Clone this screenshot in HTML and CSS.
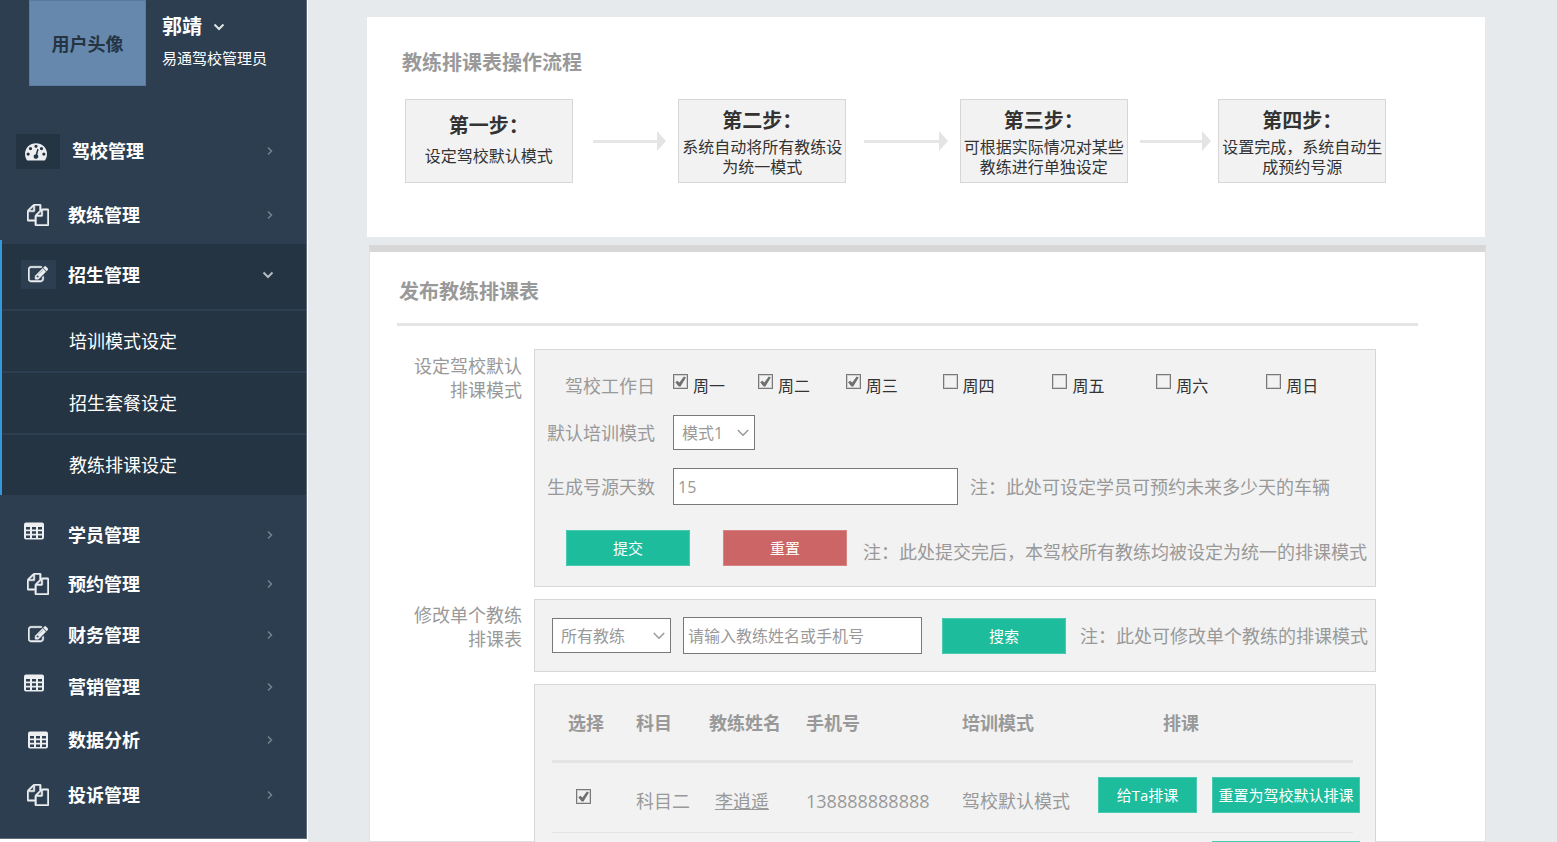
FILE: index.html
```html
<!DOCTYPE html>
<html lang="zh-CN">
<head>
<meta charset="utf-8">
<title>教练排课设定</title>
<link rel="stylesheet" href="styles.css">
</head>
<body>
<svg class="sprite" aria-hidden="true">
  <symbol id="i-dash" viewBox="0 0 1792 1792"><path d="M384 1152q0-53-37.500-90.500t-90.500-37.500-90.500 37.500-37.500 90.500 37.500 90.500 90.500 37.500 90.500-37.500 37.500-90.500zm192-448q0-53-37.500-90.500t-90.500-37.500-90.500 37.500-37.500 90.500 37.500 90.500 90.500 37.500 90.500-37.500 37.500-90.500zm428 481l101-382q6-26-7.500-48.500t-38.500-29.500-48 6.500-30 39.500l-101 382q-60 5-107 43.500t-63 98.500q-20 77 20 146t117 89 146-20 89-117q16-60-6-117t-72-91zm660-33q0-53-37.500-90.500t-90.500-37.500-90.500 37.500-37.500 90.500 37.500 90.500 90.500 37.500 90.500-37.500 37.500-90.500zm-640-640q0-53-37.500-90.500t-90.500-37.500-90.500 37.500-37.500 90.500 37.500 90.500 90.500 37.500 90.500-37.500 37.500-90.500zm448 192q0-53-37.500-90.500t-90.500-37.500-90.500 37.500-37.500 90.500 37.500 90.500 90.500 37.500 90.500-37.500 37.500-90.500zm320 448q0 261-141 483-19 29-54 29h-1402q-35 0-54-29-141-221-141-483 0-182 71-348t191-286 286-191 348-71 348 71 286 191 191 286 71 348z"/></symbol>
  <symbol id="i-files" viewBox="0 0 1792 1792"><path stroke="currentColor" stroke-width="40" d="M1696 384q40 0 68 28t28 68v1216q0 40-28 68t-68 28h-960q-40 0-68-28t-28-68v-288h-544q-40 0-68-28t-28-68v-672q0-40 20-88t48-76l408-408q28-28 76-48t88-20h416q40 0 68 28t28 68v328q68-40 128-40h416zm-544 213l-299 299h299v-299zm-640-384l-299 299h299v-299zm196 647l316-316v-416h-384v416q0 40-28 68t-68 28h-416v640h512v-256q0-40 20-88t48-76zm956 804v-1152h-384v416q0 40-28 68t-68 28h-416v640h896z"/></symbol>
  <symbol id="i-edit" viewBox="0 60 1792 1700"><path stroke="currentColor" stroke-width="50" d="M888 1184l116-116-152-152-116 116v56h96v96h56zm440-720q-16-16-33 1l-350 350q-17 17-1 33t33-1l350-350q17-17 1-33zm80 594v190q0 119-84.500 203.500t-203.500 84.500h-832q-119 0-203.500-84.500t-84.500-203.500v-832q0-119 84.500-203.500t203.500-84.500h832q63 0 117 25 15 7 18 23 3 17-9 29l-49 49q-14 14-32 8-23-6-45-6h-832q-66 0-113 47t-47 113v832q0 66 47 113t113 47h832q66 0 113-47t47-113v-126q0-13 9-22l64-64q15-15 35-7t20 29zm-96-738l288 288-672 672h-288v-288zm444 132l-92 92-288-288 92-92q28-28 68-28t68 28l152 152q28 28 28 68t-28 68z"/></symbol>
  <symbol id="i-table" viewBox="0 0 20 20"><path fill-rule="evenodd" d="M2 1.500h16a2 2 0 0 1 2 2v13a2 2 0 0 1-2 2H2a2 2 0 0 1-2-2v-13a2 2 0 0 1 2-2zM2 6v2.600h4V6zM8 6v2.600h4V6zM14 6v2.600h4V6zM2 10.200v2.600h4v-2.600zM8 10.200v2.600h4v-2.600zM14 10.200v2.600h4v-2.600zM2 14.400V17h4v-2.600zM8 14.400V17h4v-2.600zM14 14.400V17h4v-2.600z"/></symbol>
  <symbol id="i-right" viewBox="0 0 8 10"><path d="M2 1.500L5.500 5 2 8.500" fill="none" stroke="currentColor" stroke-width="1.500"/></symbol>
  <symbol id="i-down" viewBox="0 0 12 8"><path d="M1.500 1.500L6 6l4.500-4.500" fill="none" stroke="currentColor" stroke-width="2"/></symbol>
  <symbol id="i-select" viewBox="0 0 12 8"><path d="M.8 1L6 6.200 11.200 1" fill="none" stroke="currentColor" stroke-width="1.500"/></symbol>
</svg>
<div class="app">
  <aside class="sidebar">
    <div class="profile">
      <div class="avatar">用户头像</div>
      <div class="profile-text">
        <button class="user" type="button">郭靖 <svg class="user-arrow"><use href="#i-down"/></svg></button>
        <div class="role">易通驾校管理员</div>
      </div>
    </div>
    <nav>
      <div class="nav-top">
        <a class="nav-item nav-item--wide" href="#"><span class="nav-icon nav-icon--dark"><svg class="icon-lg"><use href="#i-dash"/></svg></span>驾校管理<svg class="more"><use href="#i-right"/></svg></a>
        <a class="nav-item" href="#"><span class="nav-icon"><svg class="icon-lg"><use href="#i-files"/></svg></span>教练管理<svg class="more"><use href="#i-right"/></svg></a>
      </div>
      <div class="nav-group">
        <a class="nav-item nav-item--open" href="#"><span class="nav-icon"><span class="nav-chip"><svg class="icon"><use href="#i-edit"/></svg></span></span>招生管理<svg class="more more--down"><use href="#i-down"/></svg></a>
        <a class="sub" href="#">培训模式设定</a>
        <a class="sub" href="#">招生套餐设定</a>
        <a class="sub" href="#">教练排课设定</a>
      </div>
      <div class="nav-rest">
        <a class="nav-item" href="#"><span class="nav-icon nav-icon--raised"><svg class="icon"><use href="#i-table"/></svg></span>学员管理<svg class="more"><use href="#i-right"/></svg></a>
        <a class="nav-item" href="#"><span class="nav-icon"><svg class="icon-lg"><use href="#i-files"/></svg></span>预约管理<svg class="more"><use href="#i-right"/></svg></a>
        <a class="nav-item" href="#"><span class="nav-icon"><svg class="icon"><use href="#i-edit"/></svg></span>财务管理<svg class="more"><use href="#i-right"/></svg></a>
        <a class="nav-item" href="#"><span class="nav-icon nav-icon--raised"><svg class="icon"><use href="#i-table"/></svg></span>营销管理<svg class="more"><use href="#i-right"/></svg></a>
        <a class="nav-item" href="#"><span class="nav-icon"><svg class="icon"><use href="#i-table"/></svg></span>数据分析<svg class="more"><use href="#i-right"/></svg></a>
        <a class="nav-item" href="#"><span class="nav-icon"><svg class="icon-lg"><use href="#i-files"/></svg></span>投诉管理<svg class="more"><use href="#i-right"/></svg></a>
      </div>
    </nav>
  </aside>

  <main class="main">
    <section class="panel panel--flow">
      <h2 class="title">教练排课表操作流程</h2>
      <div class="steps">
        <div class="step step--single"><h3>第一步：</h3><p>设定驾校默认模式</p></div>
        <div class="arrow arrow--first"></div>
        <div class="step"><h3>第二步：</h3><p>系统自动将所有教练设为统一模式</p></div>
        <div class="arrow arrow--second"></div>
        <div class="step"><h3>第三步：</h3><p>可根据实际情况对某些教练进行单独设定</p></div>
        <div class="arrow arrow--third"></div>
        <div class="step"><h3>第四步：</h3><p>设置完成，系统自动生成预约号源</p></div>
      </div>
    </section>

    <section class="panel panel--publish">
      <h2 class="title title--ruled">发布教练排课表</h2>
      <div class="form">
        <div class="side-label">设定驾校默认<br>排课模式</div>
        <form class="box box--defaults">
          <div class="line line--days">
            <span class="field-label">驾校工作日</span>
            <div class="days">
              <label><input class="check" type="checkbox" checked>周一</label>
              <label><input class="check" type="checkbox" checked>周二</label>
              <label><input class="check" type="checkbox" checked>周三</label>
              <label><input class="check" type="checkbox">周四</label>
              <label><input class="check" type="checkbox">周五</label>
              <label><input class="check" type="checkbox">周六</label>
              <label><input class="check" type="checkbox">周日</label>
            </div>
          </div>
          <div class="line line--mode">
            <label class="field-label" for="mode">默认培训模式</label>
            <span class="select select--mode"><select id="mode"><option>模式1</option></select><svg><use href="#i-select"/></svg></span>
          </div>
          <div class="line">
            <label class="field-label" for="count">生成号源天数</label>
            <input class="text text--count" id="count" type="text" value="15">
            <span class="note">注：此处可设定学员可预约未来多少天的车辆</span>
          </div>
          <div class="line line--actions">
            <button class="btn" type="button">提交</button>
            <button class="btn btn--red" type="button">重置</button>
            <span class="note">注：此处提交完后，本驾校所有教练均被设定为统一的排课模式</span>
          </div>
        </form>

        <div class="side-label side-label--search">修改单个教练<br>排课表</div>
        <form class="box box--search">
          <span class="select select--coach"><select aria-label="教练"><option>所有教练</option></select><svg><use href="#i-select"/></svg></span>
          <input class="text text--search" type="text" aria-label="教练姓名或手机号" placeholder="请输入教练姓名或手机号">
          <button class="btn" type="button">搜索</button>
          <span class="note">注：此处可修改单个教练的排课模式</span>
        </form>

        <div class="box box--table">
          <table>
            <colgroup><col class="c-pick"><col class="c-subject"><col class="c-name"><col class="c-phone"><col class="c-mode"><col></colgroup>
            <thead>
              <tr><th class="pick">选择</th><th>科目</th><th>教练姓名</th><th>手机号</th><th>培训模式</th><th class="plan">排课</th></tr>
            </thead>
            <tbody>
              <tr>
                <td class="tick"><input class="check" type="checkbox" aria-label="选择李逍遥" checked></td>
                <td>科目二</td>
                <td class="name"><a href="#">李逍遥</a></td>
                <td>138888888888</td>
                <td>驾校默认模式</td>
                <td><div class="row-actions"><button class="btn btn--plan" type="button">给Ta排课</button><button class="btn btn--default" type="button">重置为驾校默认排课</button></div></td>
              </tr>
              <tr class="next">
                <td></td><td></td><td></td><td></td><td></td>
                <td><div class="row-actions"><button class="btn btn--default" type="button" aria-label="重置为驾校默认排课"></button></div></td>
              </tr>
            </tbody>
          </table>
        </div>
      </div>
    </section>
  </main>
</div>
</body>
</html>
```
FILE: styles.css
```css
* { box-sizing: border-box; }

body {
  margin: 0;
  height: 100vh;
  overflow: hidden;
  background: #fff;
  color: #999;
  font: 18px/24px "Open Sans", "Noto Sans CJK SC", sans-serif;
}

button, input, select { font: inherit; margin: 0; }
h2, h3, p { margin: 0; }
a { color: inherit; }
svg { fill: currentColor; flex: none; }
.sprite { position: absolute; width: 0; height: 0; }

.app { display: flex; height: 100%; align-items: flex-start; gap: 1px; }

/* Sidebar */
.sidebar {
  flex: none;
  width: 307px;
  padding-bottom: 15px;
  background: #2d3e50;
  border-right: 1px solid #5f6c79;
  border-bottom: 1px solid #5f6c79;
  color: #fff;
}
.profile { display: flex; gap: 16px; padding-left: 29px; }
.avatar {
  width: 117px;
  height: 86px;
  border: 1px solid #5b7a9f;
  background: #6688ad;
  color: #243443;
  font-weight: bold;
  line-height: 86px;
  text-align: center;
}
.profile-text { padding-top: 12px; }
.user {
  display: flex;
  align-items: center;
  gap: 11px;
  padding: 0;
  border: 0;
  background: none;
  color: #fff;
  font-size: 20px;
  font-weight: bold;
  line-height: 30px;
}
.user-arrow { width: 12px; height: 8px; color: #dfe3e6; }
.role { padding-top: 4px; font-size: 15px; }

.nav-top { display: grid; gap: 14px; padding-top: 40px; }
.nav-item {
  display: flex;
  align-items: center;
  gap: 8px;
  height: 50px;
  padding: 0 32px 0 16px;
  font-weight: bold;
  text-decoration: none;
}
.nav-item--wide { gap: 12px; }
.nav-icon {
  display: flex;
  align-items: center;
  justify-content: center;
  width: 44px;
  height: 35px;
  color: #eceef0;
}
.nav-icon--dark { background: #243443; padding-right: 4px; }
.nav-icon--raised { padding: 0 8px 8px 0; }
.nav-chip {
  display: flex;
  align-items: center;
  justify-content: center;
  width: 35px;
  height: 29px;
  background: #2d3e50;
}
.icon { width: 20px; height: 20px; }
.icon-lg { width: 22px; height: 22px; }
.more { width: 8px; height: 10px; margin-left: auto; color: #76828e; }
.more--down { width: 12px; height: 8px; color: #b4bbc2; }

.nav-group {
  padding-top: 4px;
  border-left: 2px solid #3498db;
}
.nav-group .nav-item { padding-left: 14px; }
.nav-group .nav-item--open { height: 65px; padding-bottom: 4px; background: #243443; }
.sub {
  display: flex;
  align-items: center;
  height: 62px;
  padding-left: 67px;
  border-top: 2px solid #2d3e50;
  background: #243443;
  text-decoration: none;
}
.nav-rest {
  display: grid;
  grid-template-rows: 48px 50px 52px 52px 54px 56px;
  align-items: center;
  padding-top: 16px;
}
.nav-rest .nav-item { height: 48px; }

/* Content */
.main {
  flex: 1;
  min-width: 0;
  height: 100%;
  display: flex;
  flex-direction: column;
  padding: 17px 71px 0 59px;
  background: #e6eaed;
}
.panel { background: #fff; }
.panel--flow { margin-right: 1px; padding: 30px 99px 54px 38px; }
.panel--publish {
  flex: 1;
  min-height: 0;
  margin: 8px 0 0 2px;
  padding: 24px 109px 0 27px;
  border: 1px solid #dfe1e3;
  border-top: 7px solid #d7d7d7;
}
.title { font-size: 20px; line-height: 32px; }
.panel--flow .title { margin: 0 0 20px -3px; }
.title--ruled {
  margin-right: -42px;
  padding: 0 0 15px 2px;
  border-bottom: 3px solid #e4e4e4;
}

.steps {
  display: grid;
  grid-template-columns: 168fr 106fr 168fr 114fr 168fr 91fr 168fr;
}
.step {
  min-width: 0;
  height: 84px;
  padding-top: 7px;
  border: 1px solid #d7d7d7;
  background: #f2f2f2;
  color: #333;
  text-align: center;
}
.step h3 { font-size: 20px; line-height: 28px; }
.step p { padding-top: 2px; font-size: 16px; line-height: 20px; }
.step--single { padding-top: 12px; }
.step--single p { padding-top: 6px; }
.arrow { display: flex; align-items: center; padding: 0 12px 0 20px; }
.arrow--second { padding-left: 18px; }
.arrow--third { padding: 0 7px 0 12px; }
.arrow::before { content: ""; flex: 1; height: 3px; background: #e6e6e6; }
.arrow::after {
  content: "";
  border: 10px solid transparent;
  border-left: 9px solid #e4e4e4;
  border-right: 0;
}

.form {
  display: grid;
  grid-template-columns: 125px minmax(0, 1fr);
  gap: 12px;
  padding-top: 23px;
}
.side-label { padding-top: 5px; text-align: right; }
.side-label--search { padding-top: 4px; }
.box { border: 1px solid #d7d7d7; background: #f2f2f2; }
.box--defaults { padding: 24px 5px 20px 12px; }
.line { display: flex; align-items: center; white-space: nowrap; margin-top: 18px; }
.line--days { margin-top: 0; }
.line--mode { margin-top: 17px; }
.field-label { width: 108px; margin-right: 18px; text-align: right; }
.days {
  flex: 1;
  display: grid;
  grid-template-columns: 85fr 88fr 97fr 110fr 104fr 110fr 104fr;
  color: #333;
  font-size: 16px;
}
.days label { display: flex; align-items: flex-start; gap: 5px; }

.check {
  appearance: none;
  display: block;
  flex: none;
  width: 15px;
  height: 15px;
  border: 1px solid #797979;
  background: #f2f2f2;
  box-shadow: inset 0 0 0 1px #d0d0d0;
}
.check:checked::before {
  content: "";
  display: block;
  width: 13px;
  height: 13px;
  background: #707070;
  clip-path: polygon(10% 55%, 26% 44%, 42% 58%, 76% 12%, 92% 20%, 50% 88%, 36% 88%);
}

.select { position: relative; height: 35px; }
.select select {
  appearance: none;
  width: 100%;
  height: 100%;
  padding: 0 8px;
  border: 1px solid #797979;
  border-radius: 0;
  background: #fff;
  color: #999;
  font-size: 16px;
}
.select svg { position: absolute; right: 6px; top: 14px; width: 12px; height: 8px; pointer-events: none; }
.select--mode { width: 82px; }
.select--coach { width: 119px; }
.text {
  height: 37px;
  padding: 0 4px;
  border: 1px solid #797979;
  background: #fff;
  color: #999;
  font-size: 16px;
}
.text::placeholder { color: #999; }
.text--count { width: 285px; margin-right: 12px; }
.text--search { width: 239px; margin: 0 20px 0 12px; }
.note { white-space: nowrap; }

.btn {
  flex: none;
  width: 124px;
  height: 36px;
  padding: 0;
  border: 1px solid #49c9b0;
  background: #1cbc9c;
  color: #fff;
  font-size: 15px;
  white-space: nowrap;
}
.btn--red { border-color: #d68484; background: #cc6666; }
.line--actions { align-items: flex-end; margin-top: 25px; padding-left: 19px; }
.line--actions .btn--red { margin: 0 16px 0 33px; }
.line--actions .note { line-height: 28px; }

.box--search { display: flex; align-items: center; height: 73px; padding-left: 17px; }
.box--search .btn { margin-right: 14px; }

.box--table { grid-column: 2; padding: 0 22px 0 17px; }
table { width: 100%; table-layout: fixed; border-collapse: separate; border-spacing: 0; }
.c-pick { width: 84px; }
.c-subject { width: 73px; }
.c-name { width: 97px; }
.c-phone { width: 156px; }
.c-mode { width: 136px; }
th, td { padding: 0; text-align: left; white-space: nowrap; }
th { height: 78px; border-bottom: 3px solid #e4e4e4; }
td { height: 70px; padding-bottom: 19px; border-bottom: 1px solid #e4e4e4; vertical-align: bottom; }
.pick { padding-left: 16px; }
.plan { padding-left: 65px; }
.tick { padding: 0 0 28px 24px; }
.name { padding-left: 6px; }
.row-actions { display: flex; gap: 15px; }
.btn--plan { width: 99px; }
.btn--default { width: 148px; }
.next td { padding: 8px 0 19px; vertical-align: top; }
.next .row-actions { padding-left: 114px; }
```
